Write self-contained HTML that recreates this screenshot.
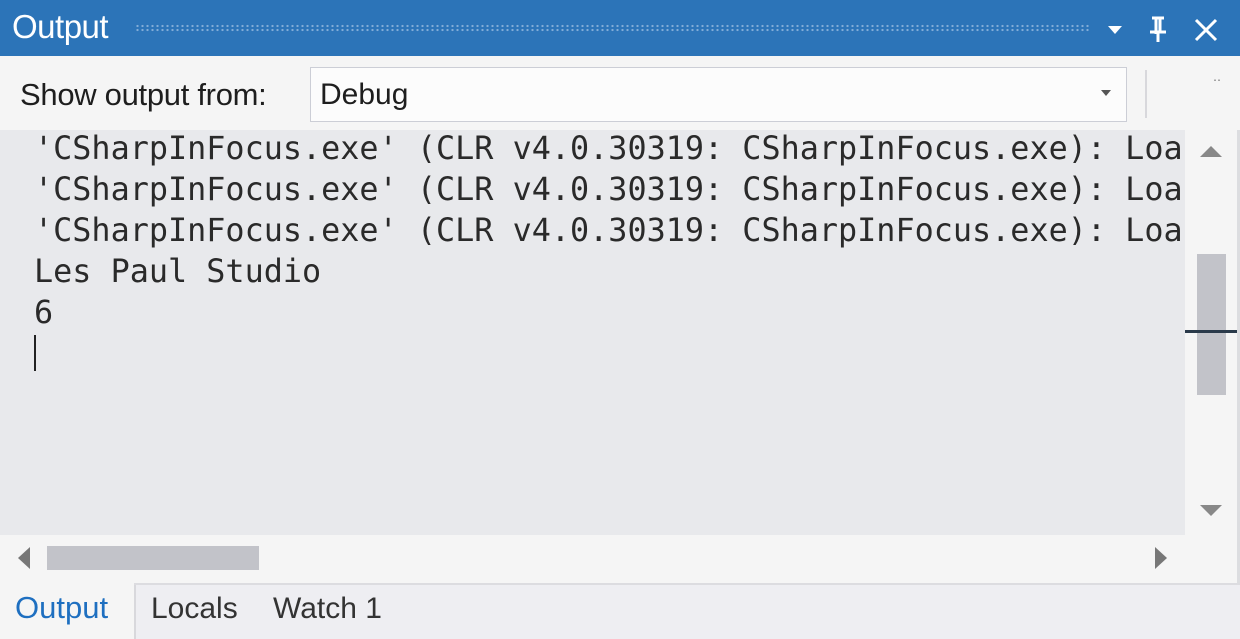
<!DOCTYPE html>
<html><head><style>
body{margin:0;width:1240px;height:639px;overflow:hidden;background:#eeeef2;font-family:"Liberation Sans",sans-serif;position:relative}
.a{position:absolute}
</style></head><body>
<div class="a" style="left:0;top:0;width:1240px;height:56px;background:#2c74b8"></div>
<div class="a" style="left:12px;top:8px;color:#fff;font-size:33px;letter-spacing:-0.5px">Output</div>
<div class="a" style="left:135px;top:24px;width:955px;height:8px;background-image:radial-gradient(circle,#a8c6e4 1px,transparent 1.3px);background-size:5px 4px;opacity:.7"></div>
<svg class="a" style="left:1100px;top:14px" width="130" height="30"><path d="M8 12 L22 12 L15 20Z" fill="#fff"/><path d="M56 4 V20 M52 4 H64 M60 4 V18 M50 18 H66 M58 18 V28" stroke="#fff" stroke-width="3" fill="none"/><path d="M96 6 L116 26 M116 6 L96 26" stroke="#fff" stroke-width="3"/></svg>
<div class="a" style="left:0;top:56px;width:1240px;height:74px;background:#f5f5f5"></div>
<div class="a" style="left:20px;top:77px;font-size:31px;color:#1e1e1e;letter-spacing:-0.3px">Show output from:</div>
<div class="a" style="left:310px;top:67px;width:815px;height:53px;background:#fcfcfc;border:1px solid #ccced6"></div>
<div class="a" style="left:320px;top:78px;font-size:30px;color:#1e1e1e">Debug</div>
<svg class="a" style="left:1100px;top:89px" width="14" height="10"><path d="M1 1 H11 L6 7Z" fill="#555"/></svg>
<div class="a" style="left:1145px;top:70px;width:2px;height:48px;background:#d8d8dc"></div>
<div class="a" style="left:1213px;top:70px;font-size:12px;color:#777">&#8228;&#8228;</div>
<div class="a" style="left:0;top:130px;width:1185px;height:405px;background:#e8e9ec"></div>
<div class="a" style="left:34px;top:128px;font-family:'DejaVu Sans Mono',monospace;font-size:31.8px;line-height:41px;color:#2a2a2a;white-space:pre;width:1150px;overflow:hidden">'CSharpInFocus.exe' (CLR v4.0.30319: CSharpInFocus.exe): Loaded
'CSharpInFocus.exe' (CLR v4.0.30319: CSharpInFocus.exe): Loaded
'CSharpInFocus.exe' (CLR v4.0.30319: CSharpInFocus.exe): Loaded
Les Paul Studio
6</div>
<div class="a" style="left:34px;top:335px;width:2px;height:36px;background:#222"></div>
<div class="a" style="left:1185px;top:130px;width:52px;height:405px;background:#f5f5f5"></div>
<svg class="a" style="left:1198px;top:144px" width="28" height="16"><path d="M2 13 L13 2 L24 13Z" fill="#888"/></svg>
<svg class="a" style="left:1198px;top:503px" width="28" height="16"><path d="M2 2 L13 13 L24 2Z" fill="#888"/></svg>
<div class="a" style="left:1197px;top:254px;width:29px;height:141px;background:#c2c3c9"></div>
<div class="a" style="left:1185px;top:330px;width:53px;height:3px;background:#2a3a4a"></div>
<div class="a" style="left:0;top:535px;width:1237px;height:50px;background:#f5f5f5"></div>
<svg class="a" style="left:14px;top:545px" width="20" height="28"><path d="M16 2 L4 13 L16 24Z" fill="#777"/></svg>
<svg class="a" style="left:1152px;top:545px" width="20" height="28"><path d="M3 2 L15 13 L3 24Z" fill="#777"/></svg>
<div class="a" style="left:47px;top:546px;width:212px;height:24px;background:#c2c3c9"></div>
<div class="a" style="left:1237px;top:130px;width:3px;height:455px;background:#dcdde0"></div>
<div class="a" style="left:0;top:585px;width:1240px;height:54px;background:#eeeef2"></div>
<div class="a" style="left:0;top:583px;width:134px;height:56px;background:#f5f5f5;border-right:2px solid #d8d8dc"></div>
<div class="a" style="left:134px;top:583px;width:1106px;height:2px;background:#dcdce0"></div>
<div class="a" style="left:15px;top:590px;font-size:31px;color:#1e6fc0">Output</div>
<div class="a" style="left:151px;top:592px;font-size:30px;color:#333">Locals</div>
<div class="a" style="left:273px;top:592px;font-size:30px;color:#333">Watch 1</div>
</body></html>
